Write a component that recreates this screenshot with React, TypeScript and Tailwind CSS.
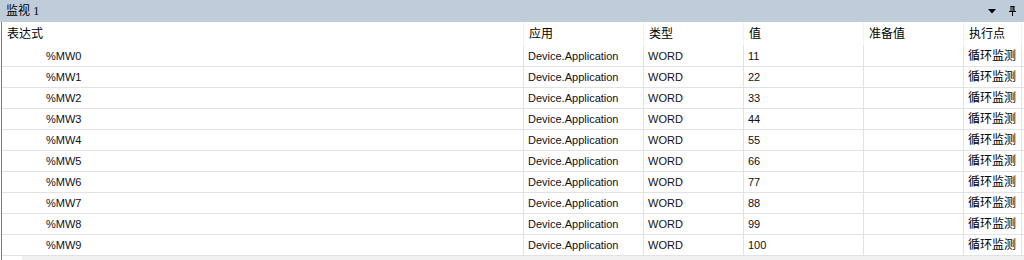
const rows = Array.from({ length: 10 }, (_, i) => ({
  expr: `%MW${i}`,
  app: "Device.Application",
  type: "WORD",
  value: String((i + 1) * 11 === 110 ? 100 : (i + 1) * 11),
  prepared: "",
  point: "循环监测",
}))

const cols = "grid-cols-[522px_120px_100px_120px_100px_58px]"
const cjk = "font-['Liberation_Sans','Noto_Sans_CJK_SC',sans-serif]"

function TitleBar() {
  return (
    <div className="flex h-[22px] items-center justify-between bg-[#bfcddb] pl-[6px] pr-[8px]">
      <span className={`text-[12px] leading-none text-black ${cjk}`}>
        监视 <span className="font-['Liberation_Serif',serif]">1</span>
      </span>
      <div className="flex items-center gap-[13px]">
        <svg width="8" height="5" viewBox="0 0 8 5">
          <path d="M0 0H8L4 4.5Z" fill="#000" />
        </svg>
        <svg width="7" height="10" viewBox="0 0 7 10">
          <path d="M1.5 0.5H5.5M2 0.5V5.5M5 0.5V5.5M4 0.5V5.5M0 5.5H7M3.5 5.5V10" stroke="#000" strokeWidth="1" fill="none" />
        </svg>
      </div>
    </div>
  )
}

export default function App() {
  return (
    <div className="h-[260px] w-[1024px] overflow-hidden bg-white">
      <TitleBar />
      <div className="ml-px h-[238px] border-l border-[#7a7a7a]">
        <div className={`grid h-[24px] ${cols} text-[12px] text-black ${cjk}`}>
          {["表达式", "应用", "类型", "值", "准备值", "执行点"].map((h, i) => (
            <div
              key={h}
              className={`flex items-center border-r border-[#f2f2f2] ${i === 0 ? "pl-[5px]" : "pl-[5px]"}`}
            >
              {h}
            </div>
          ))}
        </div>
        {rows.map((r) => (
          <div
            key={r.expr}
            className={`grid h-[21px] ${cols} border-b border-[#e2e2e2] text-[11px] text-[#101018] font-['Liberation_Sans',sans-serif]`}
          >
            <div className="flex items-center border-r border-[#e2e2e2] pl-[44px]">{r.expr}</div>
            <div className="flex items-center border-r border-[#e2e2e2] pl-[4px]">{r.app}</div>
            <div className="flex items-center border-r border-[#e2e2e2] pl-[4px]">{r.type}</div>
            <div className="flex items-center border-r border-[#e2e2e2] pl-[4px]">{r.value}</div>
            <div className="flex items-center border-r border-[#e2e2e2] pl-[4px]">{r.prepared}</div>
            <div className={`flex items-center border-r border-[#e2e2e2] pl-[4px] text-[12px] text-black ${cjk}`}>
              {r.point}
            </div>
          </div>
        ))}
        <div className="flex h-[4px]">
          <div className="w-[20px]" />
          <div className="flex-1 bg-[#f0f0f0]" />
        </div>
      </div>
    </div>
  )
}
